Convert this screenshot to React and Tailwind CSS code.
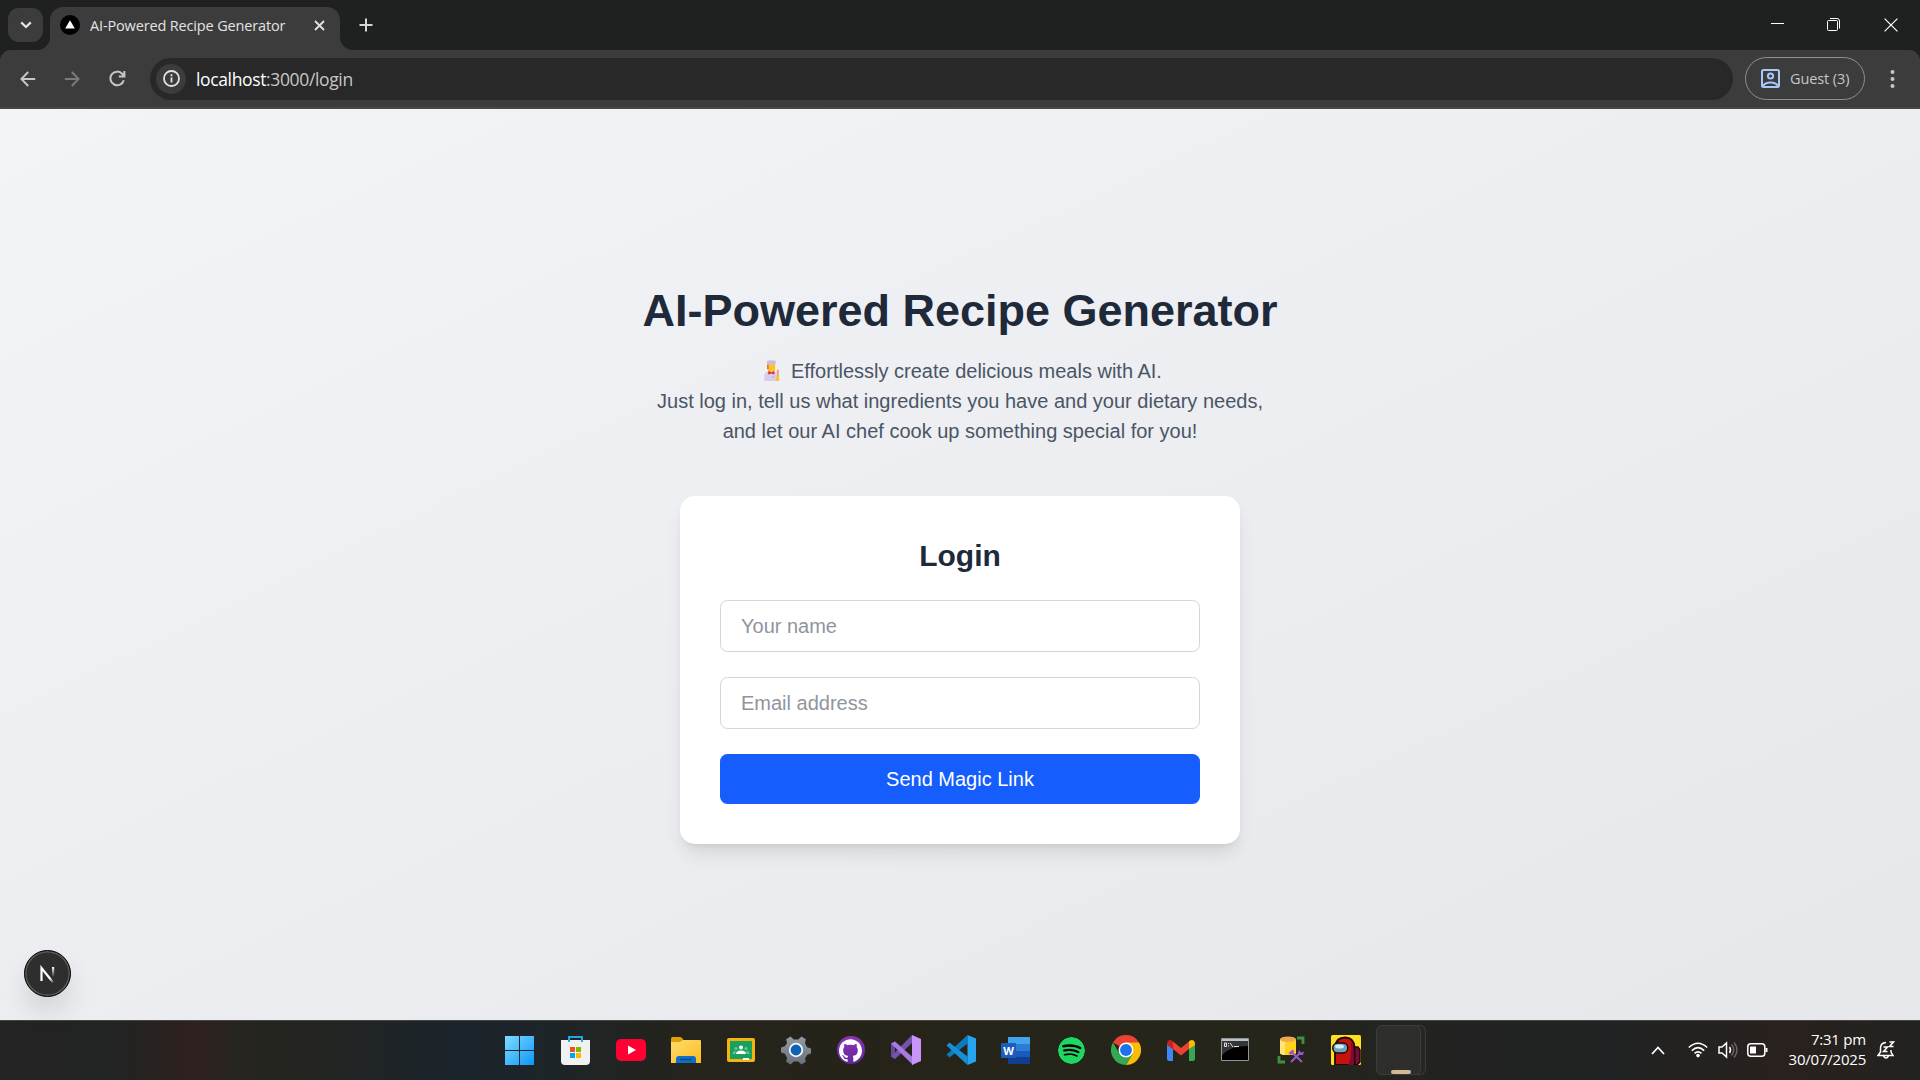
import React from "react";
import { SiGithub, SiSpotify } from "react-icons/si";

const ui = "font-['Open_Sans','Noto_Sans',sans-serif]";

function Tabs() {
  return (
    <div className="flex h-[50px] shrink-0 bg-[#1f2120] pl-2 pt-[7px] text-[#e3e3e3]">
      <div className="mt-px flex h-[34px] w-[35px] items-center justify-center rounded-[11px] bg-[#3c3c3c]">
        <svg width="12" height="8" viewBox="0 0 12 8" fill="none" stroke="#e3e3e3" strokeWidth="2.2"><path d="M1.2 1.4 6 6l4.8-4.6" /></svg>
      </div>
      <div className="relative ml-[7px] flex h-[43px] w-[290px] items-center rounded-t-[13px] bg-[#3c3c3c] pb-[7px] pl-[10px]">
        <svg className="absolute -left-[13px] bottom-0" width="13" height="13"><path d="M13 0v13H0A13 13 0 0 0 13 0Z" fill="#3c3c3c" /></svg>
        <svg className="absolute -right-[13px] bottom-0" width="13" height="13"><path d="M0 0v13h13A13 13 0 0 1 0 0Z" fill="#3c3c3c" /></svg>
        <svg width="20" height="20" viewBox="0 0 20 20"><circle cx="10" cy="10" r="10" fill="#000" /><path d="M10 5.2 14.8 13.6H5.2Z" fill="#fff" /></svg>
        <span className={ui + " ml-[10px] w-[224px] whitespace-nowrap pt-px text-[14.5px] leading-5 tracking-[-0.15px]"}>AI-Powered Recipe Generator</span>
        <svg width="11" height="11" viewBox="0 0 11 11" stroke="#e3e3e3" strokeWidth="1.8"><path d="m1 1 9 9M10 1l-9 9" /></svg>
      </div>
      <svg className="ml-[19px] mt-[11px]" width="14" height="14" viewBox="0 0 14 14" stroke="#d5d5d5" strokeWidth="2"><path d="M7 0.5v13M.5 7h13" /></svg>
      <div className="ml-auto flex pr-[22px] pt-[11px]">
        <svg className="mt-[5px]" width="13" height="2"><rect width="13" height="1" fill="#fff" /></svg>
        <svg className="ml-[43px]" width="14" height="14" viewBox="0 0 14 14" fill="none" stroke="#fff"><rect x=".5" y="2.500" width="10" height="10" rx="1" /><path d="M3 .5h7q2.500 0 2.500 2.500v7.500" /></svg>
        <svg className="ml-[43px]" width="14" height="14" viewBox="0 0 14 14" stroke="#fff" strokeWidth="1.2"><path d="m.6.6 12.8 12.8M13.4.6.6 13.4" /></svg>
      </div>
    </div>
  );
}

function Toolbar() {
  return (
    <div className="shrink-0 bg-[#1f2120]">
      <div className="flex h-[59px] items-center rounded-t-[11px] border-b-2 border-[#474747] bg-[#3c3c3c]">
        <svg className="ml-5" width="16" height="16" viewBox="0 0 16 16" fill="none" stroke="#c7c7c7" strokeWidth="1.9"><path d="M15.2 8H1.8M8.2 1 1.4 8l6.8 7" /></svg>
        <svg className="ml-[28px]" width="16" height="16" viewBox="0 0 16 16" fill="none" stroke="#7b7b7b" strokeWidth="1.9"><path d="M.8 8h13.4M7.8 1l6.8 7-6.8 7" /></svg>
        <svg className="ml-[29px]" width="17" height="17" viewBox="0 0 17 17" fill="none" stroke="#c7c7c7" strokeWidth="2"><path d="M14.8 10.2A6.8 6.8 0 1 1 13.4 4L15.2 6M15.4 1v5.6H9.8" /></svg>
        <div className="ml-6 flex h-[42px] w-[1583px] items-center rounded-full bg-[#282828] pl-[6px]">
          <div className="flex h-[30px] w-[30px] items-center justify-center rounded-full bg-[#3c3c3c]">
            <svg width="17" height="17" viewBox="0 0 17 17" fill="none" stroke="#e3e3e3" strokeWidth="1.8"><circle cx="8.5" cy="8.5" r="7.500" /><path d="M8.5 7.4v5M8.5 4.3v1.9" /></svg>
          </div>
          <span className={ui + " ml-[10px] whitespace-nowrap text-[17.5px] leading-6 tracking-[-0.36px] text-[#c7c7c7]"}><span className="text-white">localhost</span>:3000/login</span>
        </div>
        <div className="ml-3 flex h-[43px] w-[120px] items-center rounded-full border border-[#8f8f8f] pl-[15px]">
          <svg width="19" height="19" viewBox="0 0 19 19" fill="none" stroke="#a8c7fa" strokeWidth="2"><rect x="1" y="1" width="17" height="17" rx="1.5" /><circle cx="9.5" cy="7" r="2.6" /><path d="M2 17q2-3.600 7.500-3.600T17 17" /></svg>
          <span className={ui + " ml-[10px] whitespace-nowrap text-[14.5px] leading-5 tracking-[-0.1px] text-[#c7c7c7]"}>Guest (3)</span>
        </div>
        <svg className="ml-[25px]" width="5" height="18" viewBox="0 0 5 18" fill="#c7c7c7"><circle cx="2.5" cy="2" r="2" /><circle cx="2.5" cy="9" r="2" /><circle cx="2.5" cy="16" r="2" /></svg>
      </div>
    </div>
  );
}

function Cook() {
  return (
    <svg className="mr-2 mt-[-5px] inline-block" width="25" height="21" viewBox="0 0 25 21">
      <g transform="translate(5.500 0) scale(.87 1)">
        <path d="M1 21v-5q0-4 5-4.600h6q4 .6 4 4.600v5Z" fill="#d9cdea" />
        <path d="M4.600 4h8.800V9q0 3.500-4.400 3.500T4.600 9Z" fill="#ffc22e" />
        <path d="M4.200 4.500h1.600v4.500H4.200Z" fill="#b8741f" />
        <path d="M4 3Q3 .3 7 .6q2-.8 4 0 4-.3 3 2.400l-.6 1.600H4.600Z" fill="#cbbbdc" />
        <path d="m5.500 11 3.500 1.500 3.500-1.500v3.500L9 13.500l-3.500 1Z" fill="#d6264f" />
        <circle cx="11" cy="17" r=".7" fill="#9b84bb" />
        <path d="M15.800 12h1.500v6h-1.500Z" fill="#e88a3c" /><ellipse cx="16.600" cy="11.500" rx="1.500" ry="2" fill="#f9a76a" />
        <path d="M14 16.500h4V21h-4Z" fill="#ffc22e" />
      </g>
    </svg>
  );
}

function LoginPage() {
  return (
    <main className="relative flex h-[911px] shrink-0 flex-col items-center bg-linear-to-br from-gray-100 to-gray-200 pt-[177px] font-['Liberation_Sans',Arial,sans-serif]">
      <h1 className="text-[45px] font-bold leading-[50px] text-gray-800">AI-Powered Recipe Generator</h1>
      <p className="mt-5 text-center text-[20px] leading-[30px] text-gray-600">
        <Cook />Effortlessly create delicious meals with AI.<br />
        Just log in, tell us what ingredients you have and your dietary needs,<br />
        and let our AI chef cook up something special for you!
      </p>
      <form className="mt-[50px] flex h-[348px] w-[560px] flex-col rounded-[15px] bg-white p-10 shadow-[0_12px_19px_-4px_rgba(0,0,0,0.1),0_5px_8px_-5px_rgba(0,0,0,0.1)]">
        <h2 className="mb-6 text-center text-[30px] font-bold leading-10 text-gray-800">Login</h2>
        <input className="mb-[25px] h-[52px] rounded-[7.5px] border border-gray-300 px-5 text-[20px] placeholder:text-[#8f959e]" placeholder="Your name" />
        <input className="mb-[25px] h-[52px] rounded-[7.5px] border border-gray-300 px-5 text-[20px] placeholder:text-[#8f959e]" placeholder="Email address" />
        <button type="button" className="h-[50px] rounded-[7.5px] bg-[#155dfc] text-[20px] text-white">Send Magic Link</button>
      </form>
      <div className="absolute bottom-[23px] left-6 flex h-[47px] w-[47px] items-center justify-center rounded-full border border-black bg-[#2e2e2e] shadow-[inset_0_0_0_1.5px_#5a5a5a,0_16px_32px_-8px_rgba(0,0,0,0.24)]">
        <svg width="18" height="18" viewBox="0 0 18 18" fill="none" strokeWidth="2.2">
          <defs>
            <linearGradient id="n1" x1="0" y1="0" x2="1" y2="1"><stop offset=".7" stopColor="#fff" /><stop offset="1" stopColor="#fff" stopOpacity="0" /></linearGradient>
            <linearGradient id="n2" x1="0" y1="0" x2="0" y2="1"><stop stopColor="#fff" /><stop offset="1" stopColor="#fff" stopOpacity="0" /></linearGradient>
          </defs>
          <path d="M2.500 16V3L14.500 18" stroke="url(#n1)" /><rect x="13" y="2" width="2.200" height="10" fill="url(#n2)" />
        </svg>
      </div>
    </main>
  );
}

const Windows = () => (
  <svg className="mr-[3px]" width="29" height="29" viewBox="0 0 29 29"><defs><linearGradient id="w" x1="0" y1="0" x2="1" y2="1" ><stop stopColor="#7fdcff" /><stop offset="1" stopColor="#0c96fa" /></linearGradient></defs><path d="M0 0h14v14H0ZM15 0h14v14H15ZM0 15h14v14H0ZM15 15h14v14H15Z" fill="url(#w)" /></svg>
);
const Store = () => (
  <svg width="29" height="29" viewBox="0 0 29 29"><path d="M0 4h29v21q0 4-4 4H4q-4 0-4-4Z" fill="#f1f1f1" /><path d="M8 6V1h13v5" fill="none" stroke="#1fa7e8" strokeWidth="2" /><path d="M9 11h5v5H9Z" fill="#f25022" /><path d="M15 11h5v5h-5Z" fill="#7fba00" /><path d="M9 17h5v5H9Z" fill="#00a4ef" /><path d="M15 17h5v5h-5Z" fill="#ffb900" /></svg>
);
const YouTube = () => (
  <svg width="30" height="22" viewBox="0 0 30 22"><rect width="30" height="22" rx="5" fill="#ff0033" /><path d="m12 6.500 8 4.500-8 4.500Z" fill="#fff" /></svg>
);
const Folder = () => (
  <svg width="30" height="27" viewBox="0 0 30 27"><defs><linearGradient id="f" x1="0" y1="0" x2="1" y2="1"><stop stopColor="#ffdc6b" /><stop offset="1" stopColor="#fcbc22" /></linearGradient></defs><path d="M0 1.500Q0 0 1.500 0H9q1.500 0 2.500 1.500L13 4v4H0Z" fill="#e0a00c" /><path d="M0 5h9l3-2h17q1 0 1 1v22H0Z" fill="url(#f)" /><path d="M5 26v-4q0-3 3-3h14q3 0 3 3v4Z" fill="#0f6fc4" /><path d="M9 22.500h12" stroke="#0a4a86" strokeWidth="1.500" /></svg>
);
const Classroom = () => (
  <svg width="28" height="24" viewBox="0 0 28 24"><rect width="28" height="24" rx="2" fill="#f2b50f" /><path d="M3 3h22v18H3Z" fill="#18a05e" /><g fill="#fff"><circle cx="14" cy="9.500" r="2" /><path d="M9 16q0-3.500 5-3.500t5 3.500Z" /><path d="M16 20h6v2h-6Z" /></g><g fill="#6cc59a"><circle cx="9" cy="10.500" r="1.500" /><circle cx="19" cy="10.500" r="1.500" /><path d="M5.500 16q0-3 3.500-3l-1 3ZM22.500 16q0-3-3.500-3l1 3Z" /></g></svg>
);
const Settings = () => (
  <svg width="30" height="30" viewBox="0 0 30 30"><defs><linearGradient id="s" x1="0" y1="0" x2="0" y2="1"><stop stopColor="#929aa3" /><stop offset="1" stopColor="#69727c" /></linearGradient></defs><path d="m9.600 1.600 3.100 2.800h4.600l3.100-2.800 4.400 2.600-.8 4.100 2.200 3.900 3.800 1.300v5l-3.800 1.300-2.200 3.900.8 3.100-4.400 2.600-3.100-2.800h-4.600l-3.100 2.800-4.400-2.600.8-4.100-2.200-3.900L0 17.500v-5l3.800-1.300L6 8.300l-.8-4.100Z" fill="url(#s)" /><circle cx="15" cy="15" r="6.300" fill="#0d62b5" stroke="#f3f6f8" strokeWidth="1.800" /></svg>
);
const GitHub = () => (
  <div className="flex h-7 w-7 items-center justify-center rounded-full bg-linear-to-b from-[#8c35b5] to-[#62269a]"><SiGithub className="h-[23px] w-[23px] text-white" /></div>
);
const VisualStudio = () => (
  <svg width="30" height="30" viewBox="0 0 30 30"><path d="M0 8.500 4 6.500V24L0 21.500Z" fill="#6b479c" /><path d="M4 24 21 8V0L0 21.500Z" fill="#7651ad" /><path d="m4 6.500 18 16V30L0 8.500Z" fill="#a67ae0" /><path d="m21 0 9 4v22l-9 4Z" fill="#c894fa" /></svg>
);
const VSCode = () => (
  <svg width="30" height="30" viewBox="0 0 30 30"><path d="M.5 19.500 21.500 0v8.500L3.500 22.500Z" fill="#0b7bc0" /><path d="M.5 10.500 3.500 7.500l18 14V30Z" fill="#1590d8" /><path d="m21.500 0 8.500 3.500v23L21.500 30Z" fill="#27a4ef" /></svg>
);
const Word = () => (
  <svg width="29" height="27" viewBox="0 0 29 27"><path d="M7 0h22v7H7Z" fill="#41a5ee" /><path d="M7 7h22v7H7Z" fill="#2b7cd3" /><path d="M7 14h22v6H7Z" fill="#185abd" /><path d="M7 20h22v7H7Z" fill="#103f91" /><rect y="6" width="15" height="15" rx="1" fill="#1b5cbd" /><text x="7.500" y="17.500" textAnchor="middle" fontSize="11" fontWeight="700" fill="#fff" fontFamily="Open Sans">W</text></svg>
);
const Spotify = () => <SiSpotify className="ml-px h-[27px] w-[27px] rounded-full bg-black text-[#1ed760]" />;
const Chrome = () => (
  <svg width="30" height="30" viewBox="0 0 48 48"><path d="M24 24 3.200 12A24 24 0 0 1 44.800 12Z" fill="#ea4335" /><path d="M24 12h20.800A24 24 0 0 1 24 48L34.400 30Z" fill="#fbbc04" /><path d="M3.200 12 13.600 30 24 36l10.400-6L24 48A24 24 0 0 1 3.200 12Z" fill="#34a853" /><circle cx="24" cy="24" r="12" fill="#fff" /><circle cx="24" cy="24" r="9.500" fill="#1a73e8" /></svg>
);
const Gmail = () => (
  <svg width="28" height="21" viewBox="0 0 28 21"><path d="M0 4v15q0 2 2 2h4V9Z" fill="#4285f4" /><path d="M22 9v12h4q2 0 2-2V4Z" fill="#34a853" /><path d="M6 1.600 14 8l8-6.400V9l-8 6.500L6 9Z" fill="#ea4335" /><path d="M0 4Q0 0 3.500 0 5 0 6 1.600V9L0 5Z" fill="#c5221f" /><path d="M28 4q0-4-3.500-4Q23 0 22 1.600V9l6-4Z" fill="#fbbc04" /></svg>
);
const Terminal = () => (
  <svg className="mb-[2px] mr-px" width="28" height="23" viewBox="0 0 28 23"><path d="M.5.5h27v22H.5Z" fill="#000" stroke="#8f969c" /><path d="M1 1h26v2H1Z" fill="#bcc4ca" /><path d="M1 3h26v5Q9 8 1 17Z" fill="#353637" /><path d="M3.500 5v3.500h2V5ZM7 5.500h1M7 8h1M9 5l3 4M13 8.500h5" fill="none" stroke="#e4e4e4" /></svg>
);
const Database = () => (
  <svg width="28" height="28" viewBox="0 0 28 28"><path d="M3 3v14q0 2 8 2t8-2V3Z" fill="#ffd21c" /><path d="M3 3v14q0 1.500 5 2V3Z" fill="#ffe47a" /><ellipse cx="11" cy="3.300" rx="8" ry="2.800" fill="#efa751" /><path d="M20 2h6v6M2 20v6h6" fill="none" stroke="#3f9142" strokeWidth="2.800" /><path d="m14 26 9-9M15 16.500l10 9.500" stroke="#9a58c9" strokeWidth="2" /><path d="m11.500 17 4-3.500 2 2-4 3.500ZM21 17l1-3 2 2.500 3-1-1 3.500h-3Z" fill="#9a58c9" /></svg>
);
const AmongUs = () => (
  <svg width="30" height="30" viewBox="0 0 30 30"><rect width="30" height="30" rx="1.500" fill="#ffdf22" /><path d="M22 12h5l2 3v12l-3 3h-4Z" fill="#7b0b35" stroke="#1c0808" strokeWidth="1.500" /><path d="M4 30V12Q5 2.500 14 2.500q9 0 9.500 10V30Z" fill="#c4120e" stroke="#1c0808" strokeWidth="1.800" /><path d="M20 7q2.500 3 2.500 8v15H17q4-5 3-23Z" fill="#7b0b35" /><rect x="1.800" y="8" width="15" height="10" rx="4.800" fill="#6fa3b8" stroke="#1c0808" strokeWidth="1.500" /><ellipse cx="8.500" cy="11.500" rx="4.500" ry="2" fill="#d6eef5" /></svg>
);

const apps = [Windows, Store, YouTube, Folder, Classroom, Settings, GitHub, VisualStudio, VSCode, Word, Spotify, Chrome, Gmail, Terminal, Database, AmongUs];

function Taskbar() {
  return (
    <footer className="flex h-[60px] shrink-0 border-t border-[#454744] bg-[linear-gradient(90deg,#232423_0%,#222423_6%,#29211f_8.5%,#2f211f_10.2%,#262520_12.5%,#232420_16%,#1f2426_20%,#1b242b_23.5%,#1d2529_28%,#25231c_36%,#262418_46%,#262519_66%,#232321_73%,#202323_84%,#29211d_93%,#222221_100%)] pl-[493px] text-white">
      <div className="flex h-[58px]">
        {apps.map((Icon, i) => (
          <div key={i} className="flex w-[55px] items-center justify-center"><Icon /></div>
        ))}
      </div>
      <div className="ml-[3px] mt-1 h-[50px] w-[50px] rounded-[6px] border border-l-0 border-[#3c3c3a] bg-[#262625]">
        <div className="-mt-px flex h-[50px] w-[45px] items-end justify-center rounded-[6px] border border-[#3c3c3a] bg-[#2e2e2d] pl-[5px]"><div className="h-1 w-5 rounded-full bg-[#d4b896]" /></div>
      </div>
      <div className="ml-auto flex h-[58px] items-center">
        <svg width="14" height="9" viewBox="0 0 14 9" fill="none" stroke="#fff" strokeWidth="1.800"><path d="m1 8 6-6.500L13 8" /></svg>
        <svg className="ml-[23px]" width="20" height="16" viewBox="0 0 20 16" fill="none" stroke="#fff" strokeWidth="1.600"><path d="M.8 5.500q9.200-8.500 18.400 0M3.800 8.600q6.200-5.800 12.400 0M6.500 11.400q3.500-3.200 7 0" /><circle cx="10" cy="13.600" r="1.800" fill="#fff" stroke="none" /></svg>
        <svg className="ml-[10px]" width="21" height="18" viewBox="0 0 21 18" fill="none" stroke="#fff" strokeWidth="1.500"><path d="M1 6v6h3l4.500 4V2L4 6Z" /><path d="M11.500 6q2 3 0 6" /><path d="M13.500 3.500q4.500 5.500 0 11M16 1.500q6 7.500 0 15" stroke="#666" /></svg>
        <svg className="ml-[8px]" width="21" height="14" viewBox="0 0 21 14" fill="none" stroke="#fff" strokeWidth="1.500"><rect x=".8" y=".8" width="17" height="12.400" rx="3" /><path d="M3 3.500h6v7H3Z" fill="#fff" stroke="none" /><path d="M19.500 5v4" strokeWidth="2" /></svg>
        <div className={ui + " ml-[20px] w-[78px] whitespace-nowrap pb-[3px] text-right text-[15px] leading-5 tracking-[-0.22px]"}><div>7:31 pm</div><div>30/07/2025</div></div>
        <svg className="ml-[11px] mr-[25px]" width="18" height="18" viewBox="0 0 18 18" fill="none" stroke="#fff" strokeWidth="1.500"><path d="M9 1.500Q3.500 2 3.500 7v4L1 14.500h15L14 11V9" /><path d="M6.500 15q2.500 4 5 0" /><path d="M6.500 6h4l-4 4.500h4M12.500 1h4l-4 4.500h4" /></svg>
      </div>
    </footer>
  );
}

export default function App() {
  return (
    <div className="flex h-[1080px] w-[1920px] flex-col overflow-hidden">
      <Tabs />
      <Toolbar />
      <LoginPage />
      <Taskbar />
    </div>
  );
}
